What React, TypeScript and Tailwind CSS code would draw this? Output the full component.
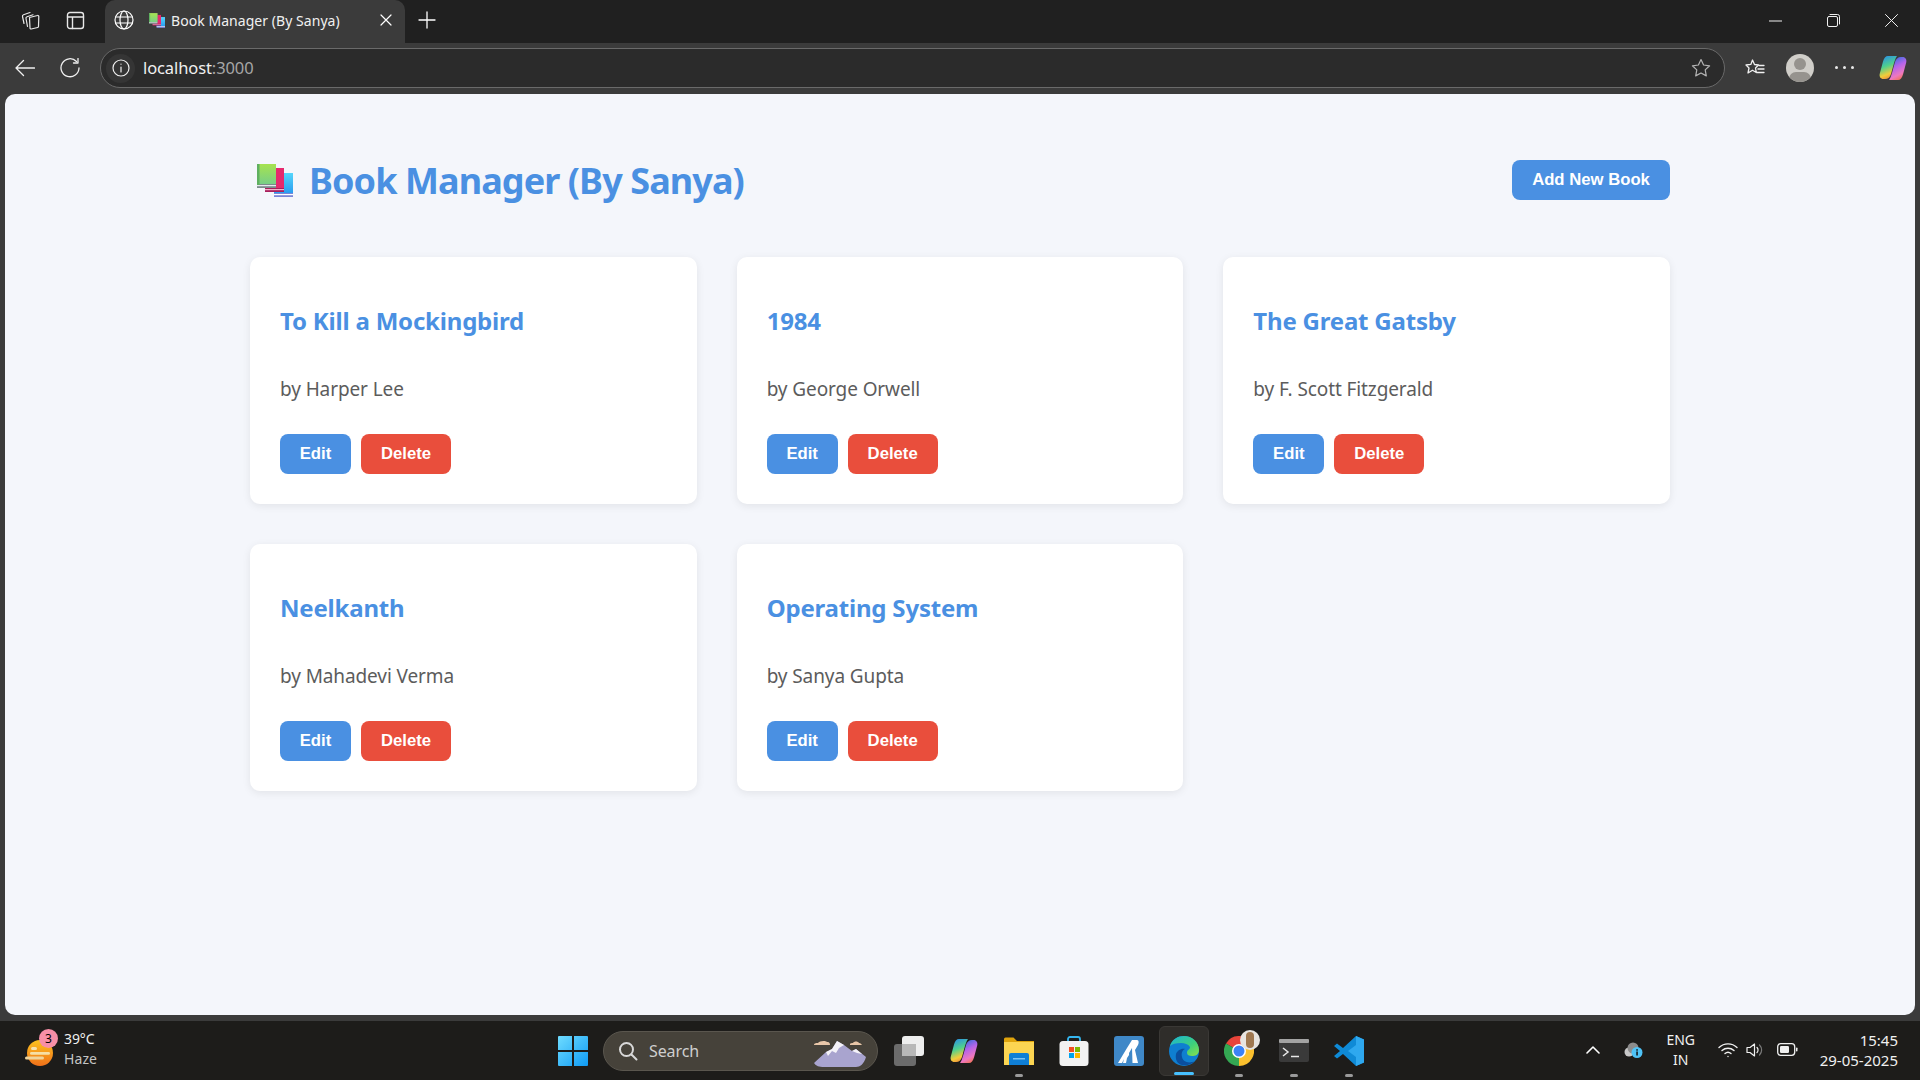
const uiFont = "font-['Noto_Sans',sans-serif]"

const books = [
  { title: 'To Kill a Mockingbird', author: 'by Harper Lee' },
  { title: '1984', author: 'by George Orwell' },
  { title: 'The Great Gatsby', author: 'by F. Scott Fitzgerald' },
  { title: 'Neelkanth', author: 'by Mahadevi Verma' },
  { title: 'Operating System', author: 'by Sanya Gupta' },
]

function BooksEmoji({ className }: { className?: string }) {
  return (
    <svg viewBox="0 0 36 33" className={className}>
      <defs>
        <linearGradient id="bkGreen" x1="0" y1="0" x2="0" y2="1">
          <stop offset="0" stopColor="#a6e34f" />
          <stop offset="1" stopColor="#78cf86" />
        </linearGradient>
        <linearGradient id="bkBlue" x1="0" y1="0" x2="0" y2="1">
          <stop offset="0" stopColor="#55d6fb" />
          <stop offset="1" stopColor="#2b9df0" />
        </linearGradient>
      </defs>
      <rect x="17" y="9" width="19" height="24" fill="#7a86d8" />
      <rect x="17" y="9" width="19" height="20" fill="url(#bkBlue)" />
      <rect x="17" y="30" width="19" height="1.2" fill="#fff" />
      <rect x="8" y="4" width="19" height="24" fill="#a81f5c" />
      <rect x="8" y="4" width="19" height="20" fill="#e6296d" />
      <rect x="8" y="25" width="19" height="1.2" fill="#f3b0c8" />
      <rect x="0" y="0" width="19" height="24" fill="#7b8b8b" />
      <rect x="0" y="0" width="19" height="20" fill="url(#bkGreen)" />
      <rect x="0" y="0" width="2.5" height="21" fill="#5fb060" />
      <rect x="0" y="21" width="19" height="1.2" fill="#e8e8f0" />
    </svg>
  )
}

function Stroke({ size, children, view = 24, width = 1.5 }: { size: number; children: React.ReactNode; view?: number; width?: number }) {
  return (
    <svg width={size} height={size} viewBox={`0 0 ${view} ${view}`} fill="none" stroke="currentColor" strokeWidth={width} strokeLinecap="round" strokeLinejoin="round">
      {children}
    </svg>
  )
}

function CopilotIcon({ size, id }: { size: number; id: string }) {
  return (
    <svg width={size} height={size} viewBox="0 0 28 28">
      <defs>
        <linearGradient id={`${id}a`} x1="0.2" y1="0" x2="0.5" y2="1">
          <stop offset="0" stopColor="#2a8fe6" />
          <stop offset="0.45" stopColor="#4fd08e" />
          <stop offset="0.8" stopColor="#f2cc3a" />
          <stop offset="1" stopColor="#f0903c" />
        </linearGradient>
        <linearGradient id={`${id}b`} x1="0.3" y1="0" x2="0.7" y2="1">
          <stop offset="0" stopColor="#2f6fe0" />
          <stop offset="0.4" stopColor="#b464ea" />
          <stop offset="0.75" stopColor="#ee78c0" />
          <stop offset="1" stopColor="#f2704a" />
        </linearGradient>
      </defs>
      <path d="M9 2h9c-1.500 2-2 4-3 7l-3 11c-.8 3-3 5-6 5H4.500C1.500 25 0 22.500.8 19.500L4 7.500C5 4 6.500 2 9 2z" fill={`url(#${id}a)`} />
      <path d="M19 26h-9c1.500-2 2-4 3-7l3-11c.8-3 3-5 6-5h1.500c3 0 4.500 2.500 3.700 5.500L24 20.500C23 24 21.500 26 19 26z" fill={`url(#${id}b)`} />
    </svg>
  )
}

function TabStrip() {
  return (
    <div className="h-[43px] bg-[#202020] flex items-end shrink-0 text-white">
      <div className="w-[105px] h-full flex items-center pl-[20px] pb-[3px] gap-[26px] text-[#e8e8e8]">
        <Stroke size={20} view={20} width={1.2}>
          <path d="M9.500 7.500 17.500 5.500a1 1 0 0 1 1.300 1l-.3 10a1 1 0 0 1-.8 1l-6.500 1.500a1 1 0 0 1-1.200-1z" />
          <path d="M7.500 16.500 6 8.500a1.500 1.500 0 0 1 1-1.800L13 4.800" />
          <path d="M4 13.500 2.500 6.500A1.500 1.500 0 0 1 3.500 4.700L10 2.500" />
        </Stroke>
        <Stroke size={19} view={19} width={1.4}>
          <rect x="1.500" y="1.500" width="16" height="16" rx="2.500" />
          <path d="M1.500 6h16M6.500 6v11.500" />
        </Stroke>
      </div>
      <div className={`w-[300px] h-full bg-[#3b3b3b] rounded-t-[10px] flex items-center pl-[9px] pr-[13px] pb-[3px] ${uiFont}`}>
        <Stroke size={20} view={20} width={1.2}>
          <circle cx="10" cy="10" r="9" />
          <ellipse cx="10" cy="10" rx="4" ry="9" />
          <path d="M1.500 7h17M1.500 13h17" />
        </Stroke>
        <BooksEmoji className="w-[16px] h-[15px] ml-[15px]" />
        <span className="ml-[6px] text-[14px] text-[#f0f0f0] tracking-[0.05px]">Book Manager (By Sanya)</span>
        <span className="ml-auto">
          <Stroke size={12} view={12} width={1.2}>
            <path d="M1 1l10 10M11 1 1 11" />
          </Stroke>
        </span>
      </div>
      <div className="h-full flex items-center pl-[13px] pb-[3px]">
        <Stroke size={18} view={18} width={1.3}>
          <path d="M9 1v16M1 9h16" />
        </Stroke>
      </div>
      <div className="ml-auto h-full flex items-center gap-[45px] pr-[22px] pb-[2px] text-[#f0f0f0]">
        <Stroke size={13} view={13} width={1}>
          <path d="M0 7h13" />
        </Stroke>
        <Stroke size={13} view={13} width={1}>
          <rect x="0.500" y="2.500" width="10" height="10" rx="1.500" />
          <path d="M3 .5h7.500a2 2 0 0 1 2 2V10" />
        </Stroke>
        <Stroke size={13} view={13} width={1}>
          <path d="M.5.5l12 12M12.500.5l-12 12" />
        </Stroke>
      </div>
    </div>
  )
}

function Toolbar() {
  return (
    <div className="h-[51px] bg-[#3b3b3b] flex items-start shrink-0 text-[#f0f0f0]">
      <div className="w-[100px] h-full flex items-center pl-[15px] pb-[2px] gap-[25px]">
        <Stroke size={20} view={20} width={1.3}>
          <path d="M19.500 10H1M8.500 2.500 1 10l7.500 7.500" />
        </Stroke>
        <Stroke size={20} view={20} width={1.3}>
          <path d="M16.500 3.500A9 9 0 1 0 19 10" />
          <path d="M18 .5v4.500h-4.500" />
        </Stroke>
      </div>
      <div className={`w-[1625px] h-[40px] mt-[5px] rounded-full border border-[#6a6a6a] bg-[#2b2b2b] flex items-center pl-[5px] pr-[13px] ${uiFont}`}>
        <span className="w-[29px] h-[29px] rounded-full bg-[#353535] flex items-center justify-center">
          <Stroke size={18} view={18} width={1.2}>
            <circle cx="9" cy="9" r="8" />
            <path d="M9 8v5M9 5v.2" />
          </Stroke>
        </span>
        <span className="ml-[8px] text-[16.500px] tracking-[-0.1px]">
          localhost<span className="text-[#a6a6a6]">:3000</span>
        </span>
        <span className="ml-auto text-[#b4b4b4]">
          <Stroke size={20} view={20} width={1.2}>
            <path d="M10 1.500l2.600 5.500 6 .8-4.400 4.100 1.100 6L10 15l-5.300 2.900 1.100-6L1.400 7.800l6-.8z" />
          </Stroke>
        </span>
      </div>
      <div className="flex-1 h-full flex items-center pl-[20px] pb-[2px]">
        <Stroke size={20} view={20} width={1.3}>
          <path d="M7.500 2l2 4.500 4 .5-3 3 .8 4.500-3.800-2.300-4.500 2.800 1-5L1 7l4.800-.6z" />
          <path d="M14 7.500h5M13 11h6M12 14.500h7" />
        </Stroke>
        <span className="ml-[21px] relative w-[28px] h-[28px] rounded-full bg-[#d0cec9] overflow-hidden shrink-0">
          <span className="absolute left-[8px] top-[4px] w-[12px] h-[12px] rounded-full bg-[#96938e]" />
          <span className="absolute left-[3px] top-[18px] w-[22px] h-[14px] rounded-full bg-[#96938e]" />
        </span>
        <span className="ml-[21px] flex gap-[5px]">
          <span className="w-[3px] h-[3px] rounded-full bg-[#e8e8e8]" />
          <span className="w-[3px] h-[3px] rounded-full bg-[#e8e8e8]" />
          <span className="w-[3px] h-[3px] rounded-full bg-[#e8e8e8]" />
        </span>
        <span className="ml-[25px]">
          <CopilotIcon size={28} id="cpTop" />
        </span>
      </div>
    </div>
  )
}

function BookCard({ title, author }: { title: string; author: string }) {
  return (
    <div className="h-[247px] bg-white rounded-[10px] shadow-[0_2px_8px_rgba(0,0,0,0.08)] pl-[30px] pt-[47px]">
      <h2 className="text-[24px] leading-[33px] font-bold text-[#4a90e2] tracking-[-0.2px]">{title}</h2>
      <p className="mt-[39px] text-[19px] leading-[26px] text-[#5c5c5c] tracking-[-0.1px]">{author}</p>
      <div className="mt-[32px] flex gap-[10px] font-['Liberation_Sans',sans-serif]">
        <button className="w-[71px] h-[40px] rounded-[8px] bg-[#4a90e2] text-white text-[16.700px] font-bold">Edit</button>
        <button className="w-[90px] h-[40px] rounded-[8px] bg-[#e94e3c] text-white text-[16.700px] font-bold">Delete</button>
      </div>
    </div>
  )
}

function Page() {
  return (
    <div className="flex-1 bg-[#3b3b3b] px-[5px] pb-[6px] min-h-0">
      <div className={`h-full bg-[#f4f6fb] rounded-[10px] pl-[245px] pr-[245px] pt-[66px] ${uiFont}`}>
        <div className="h-[40px] flex items-center justify-between">
          <div className="flex items-center pl-[7px]">
            <BooksEmoji className="w-[36px] h-[33px]" />
            <h1 className="ml-[16px] mt-[2px] text-[36px] font-bold leading-[40px] text-[#4a90e2] tracking-[-0.92px]">Book Manager (By Sanya)</h1>
          </div>
          <button className="w-[158px] h-[40px] rounded-[8px] bg-[#4a90e2] text-white text-[16.700px] font-bold font-['Liberation_Sans',sans-serif]">Add New Book</button>
        </div>
        <div className="mt-[57px] grid grid-cols-3 gap-[40px]">
          {books.map((b) => (
            <BookCard key={b.title} title={b.title} author={b.author} />
          ))}
        </div>
      </div>
    </div>
  )
}

function Slot({ children, active, dot }: { children: React.ReactNode; active?: boolean; dot?: boolean }) {
  return (
    <div className={`relative w-[50px] h-[50px] mx-[2.500px] flex items-center justify-center rounded-[6px] ${active ? 'bg-[#2f2d2a] border border-[#3a3835]' : ''}`}>
      {children}
      {dot && <span className="absolute bottom-[-1px] left-[21px] w-[8px] h-[3px] rounded-full bg-[#9a9a9a]" />}
      {active && <span className="absolute bottom-[0px] left-[14px] w-[20px] h-[3px] rounded-full bg-[#47c1ff]" />}
    </div>
  )
}

function Taskbar() {
  return (
    <div className={`h-[59px] shrink-0 bg-[#1d1c1a] flex items-center text-white relative ${uiFont}`}>
      <div className="w-[555px] h-full flex items-center pl-[25px] shrink-0">
        <div className="relative w-[30px] h-[30px]">
          <svg width="30" height="30" viewBox="0 0 30 30">
            <defs>
              <linearGradient id="sunG" x1="0" y1="0" x2="0" y2="1">
                <stop offset="0" stopColor="#fcc31f" />
                <stop offset="1" stopColor="#f0701a" />
              </linearGradient>
            </defs>
            <circle cx="15" cy="17" r="13" fill="url(#sunG)" />
            <rect x="6" y="11" width="6" height="3" rx="1.500" fill="#f6e3b0" />
            <rect x="5" y="16" width="20" height="2.800" rx="1.400" fill="#f6dfa5" />
            <rect x="0" y="20.500" width="19" height="3" rx="1.500" fill="#f0d49a" />
          </svg>
          <span className="absolute left-[14px] top-[-7px] w-[19px] h-[19px] rounded-full bg-[#f78fa7] text-black text-[12px] leading-[19px] text-center">3</span>
        </div>
        <div className="ml-[9px] mb-[3px] text-[14px] leading-[20px]">
          <div className="text-[#f0f0f0] tracking-[-0.1px]">39°C</div>
          <div className="text-[#c4c4c4] tracking-[0.1px]">Haze</div>
        </div>
      </div>

      <div className="flex items-center h-full">
        <svg width="30" height="30" viewBox="0 0 30 30" className="ml-[3px]">
          <defs>
            <linearGradient id="winG" x1="0" y1="0" x2="1" y2="1">
              <stop offset="0" stopColor="#6fdcff" />
              <stop offset="1" stopColor="#0f9bf5" />
            </linearGradient>
          </defs>
          <path d="M1 0h13v14H0V1a1 1 0 0 1 1-1zM16 0h13a1 1 0 0 1 1 1v13H16zM0 16h14v14H1a1 1 0 0 1-1-1zM16 16h14v13a1 1 0 0 1-1 1H16z" fill="url(#winG)" />
        </svg>
        <div className="ml-[15px] w-[275px] h-[40px] rounded-full bg-[#46423a] border border-[#5a564e] flex items-center pl-[14px] relative overflow-hidden">
          <span className="text-[#d8d8d8]">
            <Stroke size={20} view={20} width={2}>
              <circle cx="8.500" cy="8.500" r="6.500" />
              <path d="M13.500 13.500 18.500 18.500" />
            </Stroke>
          </span>
          <span className="ml-[11px] text-[16px] text-[#cfcfcf] tracking-[-0.1px]">Search</span>
          <svg width="64" height="32" viewBox="0 0 64 32" className="absolute right-[3px] top-[5px]">
            <path d="M4 26 16 15l6-3 5-8 7 4 8 6 4-2 10 8c-2 7-6 10-10 10H14C9 30 6 29 4 26z" fill="#a9a4cf" />
            <path d="M16 15l6-3 5-8 7 4-5 3-3 5-4-2-4 5zM42 14l4-2 6 5-5-1z" fill="#f4f2f8" />
            <path d="M4 8c0-2 3-2 4-2 1-2 7-3 9-1 3 0 3 2 3 3H4zM40 7c0-1 2-1 3-1 1-2 5-2 6 0 2 0 2 1 3 2H40z" fill="#e8c6a8" />
          </svg>
        </div>
        <div className="ml-[3px] flex items-center">
          <Slot>
            <span className="relative w-[30px] h-[30px]">
              <span className="absolute left-0 top-[8px] w-[22px] h-[22px] rounded-[3px] bg-[#6b6b6b]" />
              <span className="absolute left-[8px] top-0 w-[22px] h-[20px] rounded-[3px] bg-[#eeeeee]" />
              <span className="absolute left-[8px] top-[8px] w-[14px] h-[12px] bg-[#b8b8b8]" />
            </span>
          </Slot>
          <Slot>
            <CopilotIcon size={28} id="cpBar" />
          </Slot>
          <Slot dot>
            <svg width="30" height="28" viewBox="0 0 30 28">
              <path d="M0 2a1.500 1.500 0 0 1 1.500-1.500h8L13 4h17v5H0z" fill="#e0a40c" />
              <path d="M0 5h30v23H0z" fill="#fcd552" />
              <path d="M5 18a2 2 0 0 1 2-2h16a2 2 0 0 1 2 2v10H5z" fill="#0f7fd6" />
              <rect x="9" y="21" width="12" height="1.500" fill="#7cc4f5" />
            </svg>
          </Slot>
          <Slot>
            <svg width="30" height="30" viewBox="0 0 30 30">
              <path d="M9 6V3a2 2 0 0 1 2-2h8a2 2 0 0 1 2 2v3" fill="none" stroke="#35b6ef" strokeWidth="1.800" />
              <rect x="0.500" y="5" width="29" height="25" rx="3.500" fill="#f2f2f2" />
              <rect x="10" y="11" width="5" height="5" fill="#f25022" />
              <rect x="16" y="11" width="5" height="5" fill="#7fba00" />
              <rect x="10" y="17" width="5" height="5" fill="#00a4ef" />
              <rect x="16" y="17" width="5" height="5" fill="#ffb900" />
            </svg>
          </Slot>
          <Slot>
            <svg width="30" height="30" viewBox="0 0 30 30">
              <rect width="30" height="30" rx="3" fill="#3f88c8" />
              <path d="M4 27 13 12l5-8h5c2 0 2 3 1 5l-3 5 3 13h-6l-1-11-4 6-1 5h-3l1-4-2 4z" fill="#ffffff" />
              <path d="M15 17l3-5 .5 15h-3z" fill="#3f88c8" />
            </svg>
          </Slot>
          <Slot active>
            <svg width="30" height="30" viewBox="0 0 30 30">
              <defs>
                <linearGradient id="edgeA" x1="0" y1="0" x2="1" y2="1">
                  <stop offset="0" stopColor="#1bb4d8" />
                  <stop offset="0.6" stopColor="#3fd07a" />
                  <stop offset="1" stopColor="#8be04a" />
                </linearGradient>
              </defs>
              <circle cx="15" cy="15" r="15" fill="#0f7fd0" />
              <path d="M1 10C3 3 9 0 15 0c8 0 15 6 15 14 0 5-4 6-7 6-3 0-5-1-5-3 0-4 3-3 3-6-2-3-5-4-9-4-5 0-9 1-11 3z" fill="url(#edgeA)" />
              <path d="M13 29c-5-1-7-6-6-11 1-3 5-6 9-5-3 1-4 5-3 8 1 5 7 7 13 4-3 3-8 5-13 4z" fill="#0b4f9e" />
            </svg>
          </Slot>
          <Slot dot>
            <span className="relative w-[30px] h-[30px]">
              <svg width="30" height="30" viewBox="0 0 30 30">
                <path d="M15 15 28 7.500A15 15 0 0 0 2 7.500z" fill="#e8443a" />
                <path d="M15 15 2 7.500A15 15 0 0 0 15 30z" fill="#34a853" />
                <path d="M15 15 15 30A15 15 0 0 0 28 7.500z" fill="#fbc02d" />
                <circle cx="15" cy="15" r="7" fill="#fff" />
                <circle cx="15" cy="15" r="5.500" fill="#3b82f6" />
              </svg>
              <span className="absolute left-[16px] top-[-6px] w-[20px] h-[20px] rounded-full bg-[#e8e4e0] flex items-center justify-center">
                <span className="w-[8px] h-[16px] rounded-full bg-[#a07850]" />
              </span>
            </span>
          </Slot>
          <Slot dot>
            <svg width="30" height="23" viewBox="0 0 30 23">
              <rect width="30" height="23" rx="2" fill="#3a3a3a" />
              <rect width="30" height="4" fill="#a3a3a3" rx="1" />
              <path d="M4 9l5 4-5 4" fill="none" stroke="#e8e8e8" strokeWidth="1.500" />
              <path d="M12 17.500h8" stroke="#e8e8e8" strokeWidth="1.500" />
            </svg>
          </Slot>
          <Slot dot>
            <svg width="30" height="30" viewBox="0 0 30 30">
              <path d="M22 0l8 3.500v23L22 30 9 18l-6 4.500L0 20l6-5-6-5 3-2.500L9 12z" fill="#0f8ad6" />
              <path d="M22 0l8 3.500v23L22 30V21l-8-6 8-6z" fill="#2ea8ef" />
            </svg>
          </Slot>
        </div>
      </div>

      <div className="ml-auto flex items-center h-full pr-[22px] pb-[2px]">
        <span className="text-white">
          <Stroke size={14} view={14} width={1.6}>
            <path d="M1 10l6-6 6 6" />
          </Stroke>
        </span>
        <svg width="20" height="16" viewBox="0 0 20 16" className="ml-[23px]">
          <circle cx="6" cy="10" r="4.500" fill="#c8c8c8" />
          <circle cx="10" cy="6" r="5.500" fill="#8c8c8c" />
          <circle cx="14" cy="10.500" r="5.500" fill="#4fc3f7" />
          <rect x="13.300" y="9.500" width="1.500" height="4" fill="#111" />
          <rect x="13.300" y="7.200" width="1.500" height="1.500" fill="#111" />
        </svg>
        <div className="ml-[20px] w-[36px] text-center text-[14px] leading-[20px] text-[#f0f0f0] tracking-[-0.1px]">
          <div>ENG</div>
          <div>IN</div>
        </div>
        <span className="ml-[19px] text-[#f0f0f0]">
          <Stroke size={20} view={20} width={1.4}>
            <path d="M1 7.500a13 13 0 0 1 18 0M4 10.500a9 9 0 0 1 12 0M7 13.500a4.500 4.500 0 0 1 6 0" />
            <path d="M10 16.500v.1" />
          </Stroke>
        </span>
        <span className="ml-[7px] text-[#f0f0f0]">
          <Stroke size={20} view={20} width={1.2}>
            <path d="M2 7.500h3L9.500 4v12L5 12.500H2z" />
            <path d="M12 7.500a3.500 3.500 0 0 1 0 5" />
            <path d="M14.500 5a7 7 0 0 1 0 10" stroke="#7a7a7a" />
          </Stroke>
        </span>
        <svg width="21" height="13" viewBox="0 0 21 13" className="ml-[12px]">
          <rect x="0.700" y="0.700" width="17" height="11.600" rx="3" fill="none" stroke="#f0f0f0" strokeWidth="1.300" />
          <rect x="3" y="3" width="9" height="7" rx="1.200" fill="#f0f0f0" />
          <rect x="19" y="4.500" width="1.500" height="4" rx="0.700" fill="#f0f0f0" />
        </svg>
        <div className="ml-[22px] text-right text-[15px] leading-[20px] text-[#f0f0f0]">
          <div>15:45</div>
          <div>29-05-2025</div>
        </div>
      </div>
    </div>
  )
}

export default function App() {
  return (
    <div className="w-[1920px] h-[1080px] flex flex-col overflow-hidden">
      <TabStrip />
      <Toolbar />
      <Page />
      <Taskbar />
    </div>
  )
}
